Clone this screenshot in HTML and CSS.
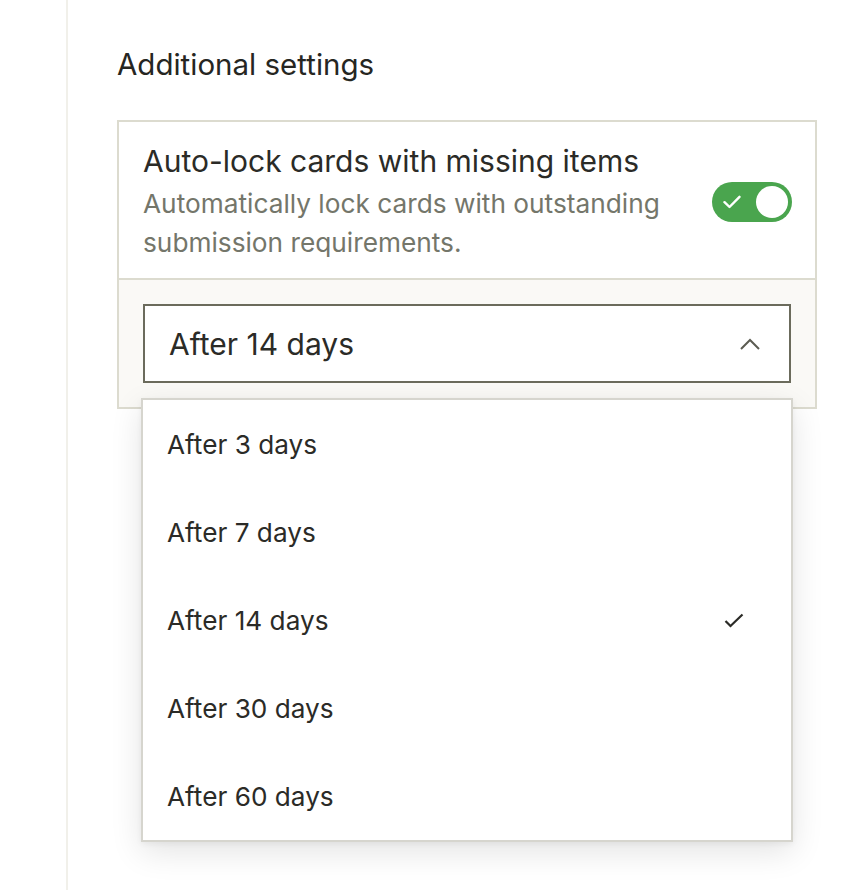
FILE: index.html
```html
<!DOCTYPE html>
<html lang="en">
<head>
<meta charset="utf-8">
<title>Additional settings</title>
<link rel="stylesheet" href="styles.css">
</head>
<body>
<div class="page">
  <aside class="rail"></aside>
  <main class="content">
    <h2 class="section-title">Additional settings</h2>
    <div class="card">
      <div class="card-top">
        <div class="card-text">
          <div class="card-title">Auto-lock cards with missing items</div>
          <div class="card-desc">Automatically lock cards with outstanding submission requirements.</div>
        </div>
        <div class="toggle" role="switch" aria-checked="true">
          <svg class="toggle-check" width="18" height="14" viewBox="0 0 18 14"><path d="M1.5 7.2 L6.5 12 L16.5 1.8" fill="none" stroke="#fff" stroke-width="2.4" stroke-linecap="round" stroke-linejoin="round"/></svg>
          <span class="toggle-knob"></span>
        </div>
      </div>
      <div class="card-bottom">
        <div class="select-wrap">
          <div class="select">
            <span class="select-value">After 14 days</span>
            <svg class="chevron" width="20" height="12" viewBox="0 0 20 12"><path d="M1 11 L10 2 L19 11" fill="none" stroke="#5c5c52" stroke-width="2"/></svg>
          </div>
          <ul class="menu">
            <li class="menu-item">After 3 days</li>
            <li class="menu-item">After 7 days</li>
            <li class="menu-item selected">After 14 days
              <svg class="menu-check" width="20" height="15" viewBox="0 0 20 15"><path d="M1.5 8 L6.5 13 L18.5 1.5" fill="none" stroke="#2b2b27" stroke-width="2.2"/></svg>
            </li>
            <li class="menu-item">After 30 days</li>
            <li class="menu-item">After 60 days</li>
          </ul>
        </div>
      </div>
    </div>
  </main>
</div>
</body>
</html>
```

FILE: styles.css
```css
* { box-sizing: border-box; }
html, body { margin: 0; padding: 0; background: #fff; }
body {
  font-family: Inter, "Liberation Sans", sans-serif;
  color: #2b2b27;
  width: 850px;
  height: 890px;
  overflow: hidden;
}
.page {
  display: flex;
  height: 890px;
}
.rail {
  width: 68px;
  flex: none;
  border-right: 2px solid #f1f0ea;
}
.content {
  flex: none;
  width: 782px;
  padding: 47px 0 0 49px;
}
.section-title {
  margin: 0 0 39px 0;
  font-size: 29.5px;
  font-weight: 400;
  line-height: 34px;
  color: #262622;
}
.card {
  width: 700px;
  border: 2px solid #dcdbcf;
}
.card-top {
  display: flex;
  align-items: center;
  justify-content: space-between;
  padding: 20px 23px 16px 24px;
  border-bottom: 2px solid #dcdbcf;
  background: #fff;
}
.card-text { width: 545px; }
.card-title {
  font-size: 30px;
  line-height: 38px;
  font-weight: 400;
  margin-bottom: 4px;
}
.card-desc {
  font-size: 26.25px;
  line-height: 39px;
  color: #74766a;
}
.toggle {
  width: 80px;
  height: 40px;
  border-radius: 20px;
  background: #4aa54e;
  flex: none;
  display: flex;
  align-items: center;
  justify-content: space-between;
  padding: 0 4px 0 11px;
}
.toggle-knob {
  width: 32px;
  height: 32px;
  border-radius: 50%;
  background: #fff;
}
.card-bottom {
  background: #faf9f6;
  padding: 24px;
}
.select-wrap { position: relative; }
.select {
  height: 79px;
  border: 2px solid #6b6b5c;
  background: #fff;
  display: flex;
  align-items: center;
  justify-content: space-between;
  padding: 0 29px 0 24px;
}
.select-value {
  font-size: 30px;
}
.menu {
  position: absolute;
  left: -2px;
  right: -2px;
  top: 94px;
  margin: 0;
  padding: 0;
  list-style: none;
  background: #fff;
  border: 2px solid #d6d5ce;
  box-shadow: 0 10px 30px rgba(0, 0, 0, 0.11), 0 2px 6px rgba(0, 0, 0, 0.05);
  z-index: 10;
}
.menu-item {
  height: 88px;
  display: flex;
  align-items: center;
  justify-content: space-between;
  padding: 0 47px 0 24px;
  font-size: 26.2px;
}
```
